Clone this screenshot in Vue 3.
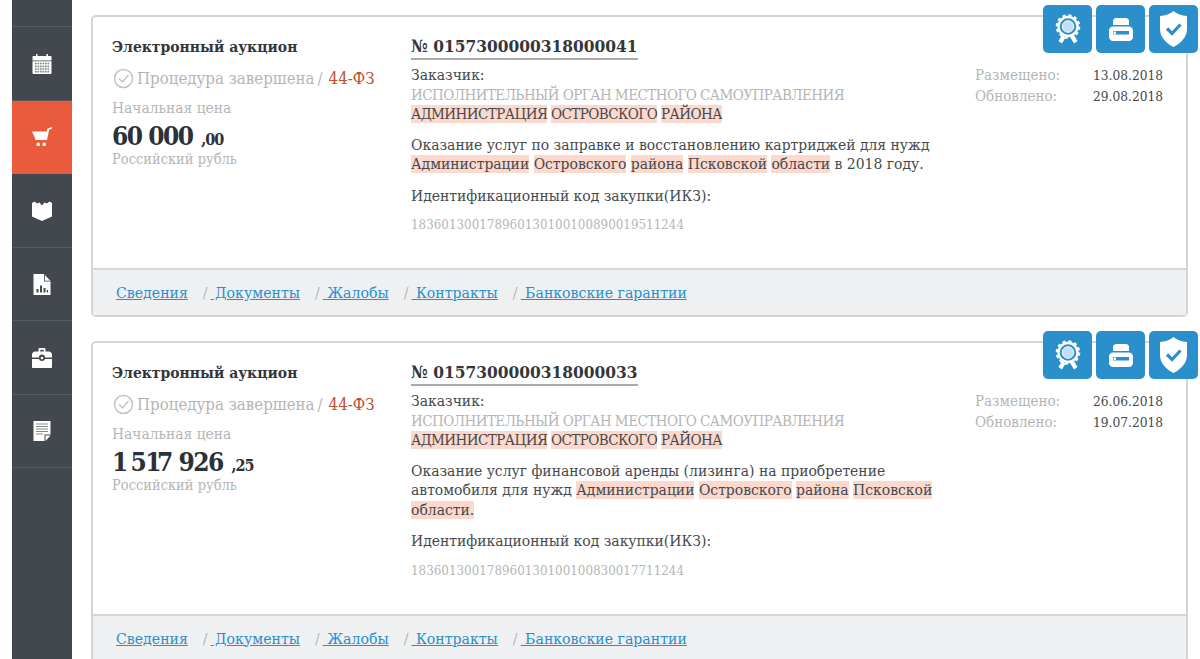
<template>
  <div class="page">
    <!-- боковое меню -->
    <nav class="sidebar">
      <div class="side-item side-top"></div>
      <div v-for="item in menu" :key="item.name" class="side-item" :class="{ active: item.active }">
        <svg v-if="item.name === 'calendar'" width="20" height="20" viewBox="0 0 20 20">
          <path fill="#fff" d="M4 0h1.600v2h8.800V0H16v2h2.500c.6 0 1 .4 1 1v3.500H.5V3c0-.6.4-1 1-1H4z" />
          <path fill="#fff" d="M.5 7.200h19V19c0 .6-.4 1-1 1h-17c-.6 0-1-.4-1-1z" />
          <path fill="none" stroke="#85898d" stroke-width="1.700" stroke-dasharray="1.700 .8" d="M3 9.500h14M3 12.300h14M3 15h14M3 17.700h14" />
        </svg>
        <svg v-else-if="item.name === 'cart'" width="20" height="20" viewBox="0 0 20 20">
          <path fill="#fff" d="M20 0l-.5 2-2.300.6L15 13H3.500L2.800 10.500 0 4.500h14.800l.6-2.800z" />
          <rect fill="#fff" x="4.500" y="15.500" width="3.500" height="3.500" rx="1.500" />
          <rect fill="#fff" x="10.500" y="15.500" width="3.500" height="3.500" rx="1.500" />
        </svg>
        <svg v-else-if="item.name === 'book'" width="20" height="20" viewBox="0 0 20 20">
          <path fill="#fff" d="M0 2l2.500-1.500L5 2.500l2.500-1L10 4.500l2.500-3 2.500 1L17.500.5 20 2v13.500L10 20 0 15.500z" />
        </svg>
        <svg v-else-if="item.name === 'report'" width="18" height="21" viewBox="0 0 18 21">
          <path fill="#fff" fill-rule="evenodd" d="M.5 0h10.500l6.500 7v14H.5zM3.500 15v3.500h2V15zm3.500-3.500v7h2v-7zm3.500 2.500v4.500h2V14zm3.200 2v2.500h1.300V16z" />
          <path fill="#42484d" d="M11 0v7.500h6.500v-.8h-5.700V0z" />
        </svg>
        <svg v-else-if="item.name === 'case'" width="20" height="20" viewBox="0 0 20 20">
          <path fill="#fff" fill-rule="evenodd" d="M6.500 3.500V1c0-.5.5-1 1-1h5c.5 0 1 .5 1 1v2.500H17c1.500 0 3 1.500 3 3v3H13a3 3 0 0 0-6 0H0v-3c0-1.500 1.500-3 3-3zM8.300 3.500h3.400V1.700H8.300z" />
          <path fill="#fff" d="M0 11h7c.4 1.300 1.600 2 3 2s2.600-.7 3-2h7v8c0 .6-.4 1-1 1H1c-.6 0-1-.4-1-1z" />
          <circle fill="#fff" cx="10" cy="10" r="1.300" />
        </svg>
        <svg v-else width="18" height="20" viewBox="0 0 18 20">
          <path fill="#fff" d="M.5 0h17v13.500h-6V20H.5z" />
          <path fill="none" stroke="#85898d" d="M3 3h12M3 5.500h12M3 8h12M3 10.500h12M3 13h7" />
          <path fill="#fff" d="M12.500 14.500h5L12.500 20z" />
        </svg>
      </div>
    </nav>

    <main class="content">
      <article v-for="card in cards" :key="card.number" class="card">
        <div class="actions">
          <button class="action">
            <svg width="26" height="30" viewBox="0 0 26 30">
              <circle cx="13" cy="12.500" r="9.500" fill="none" stroke="#fff" stroke-width="2.400" />
              <circle cx="13" cy="12.500" r="11.200" fill="none" stroke="#fff" stroke-width="2.200" stroke-dasharray="3.200 2.660" />
              <circle cx="13" cy="12.500" r="5.800" fill="#c3dff1" stroke="#fff" stroke-width="1" />
              <path fill="#fff" d="M7 21l3.500 2.500-3.500 6-3.500-2.500zM19 21l-3.500 2.500 3.500 6 3.500-2.500z" />
            </svg>
          </button>
          <button class="action">
            <svg width="24" height="23" viewBox="0 0 24 23">
              <path fill="#fff" d="M4 7V3c0-1.600 1.400-3 3-3h10c1.600 0 3 1.400 3 3v4z" />
              <path fill="#fff" fill-rule="evenodd" d="M4 8.500h16c2.200 0 4 1.800 4 4V19c0 2.200-1.800 4-4 4H4c-2.200 0-4-1.800-4-4v-6.500c0-2.200 1.800-4 4-4zm0 4.500v3.500h16V13z" />
              <path fill="#fff" d="M4.500 13.500h2.500V16H4.500z" />
            </svg>
          </button>
          <button class="action">
            <svg width="27" height="36" viewBox="0 0 27 36">
              <path fill="#fff" d="M13.500 0c3.500 3 8 4.500 13.500 5v13c0 8-6 14-13.500 18C6 32 0 26 0 18V5c5.500-.5 10-2 13.500-5z" />
              <path fill="none" stroke="#2a8fcb" stroke-width="3.200" d="M7 17.500l5 5 8.500-9" />
            </svg>
          </button>
        </div>

        <div class="card-body">
          <div class="col-left">
            <div class="kind">Электронный аукцион</div>
            <div class="status">
              <svg width="21" height="21" viewBox="0 0 21 21">
                <circle cx="10.500" cy="10.500" r="9" fill="none" stroke="#c4c4c4" stroke-width="1.500" />
                <path fill="none" stroke="#c4c4c4" stroke-width="1.500" d="M6 10.500l3.500 3.500 6-7" />
              </svg>
              <span>Процедура завершена</span>
              <span>/</span>
              <span class="law">44-ФЗ</span>
            </div>
            <div class="price-label">Начальная цена</div>
            <div class="price"><span v-for="(ch, i) in card.price" :key="i" :class="{ one: ch === '1' }">{{ ch }}</span> <small>,{{ card.cents }}</small></div>
            <div class="currency">Российский рубль</div>
          </div>

          <div class="col-mid">
            <div class="number-row"><span class="number">№ {{ card.number }}</span></div>
            <div class="line">Заказчик:</div>
            <div class="line caps muted">ИСПОЛНИТЕЛЬНЫЙ ОРГАН МЕСТНОГО САМОУПРАВЛЕНИЯ</div>
            <div class="line caps"><mark>АДМИНИСТРАЦИЯ</mark> <mark>ОСТРОВСКОГО</mark> <mark>РАЙОНА</mark></div>
            <p class="descr">
              <template v-for="(part, i) in card.descr" :key="i">
                <mark v-if="part.hl">{{ part.text }}</mark>
                <template v-else>{{ part.text }}</template>
                {{ ' ' }}
              </template>
            </p>
            <div class="line">Идентификационный код закупки(ИКЗ):</div>
            <div class="code">{{ card.code }}</div>
          </div>

          <div class="col-right">
            <div class="date-row"><span>Размещено:</span><b>{{ card.posted }}</b></div>
            <div class="date-row"><span>Обновлено:</span><b>{{ card.updated }}</b></div>
          </div>
        </div>

        <div class="card-foot">
          <template v-for="(link, i) in links" :key="link">
            <span v-if="i" class="sep">/</span>
            <a href="#">{{ i ? ' ' + link : link }}</a>
          </template>
        </div>
      </article>
    </main>
  </div>
</template>

<script setup>
const menu = [
  { name: 'calendar' },
  { name: 'cart', active: true },
  { name: 'book' },
  { name: 'report' },
  { name: 'case' },
  { name: 'note' }
]

const links = ['Сведения', 'Документы', 'Жалобы', 'Контракты', 'Банковские гарантии']

const cards = [
  {
    number: '0157300000318000041',
    price: '60 000',
    cents: '00',
    posted: '13.08.2018',
    updated: '29.08.2018',
    code: '183601300178960130100100890019511244',
    descr: [
      { text: 'Оказание услуг по заправке и восстановлению картриджей для нужд' },
      { text: 'Администрации', hl: true },
      { text: 'Островского', hl: true },
      { text: 'района', hl: true },
      { text: 'Псковской', hl: true },
      { text: 'области', hl: true },
      { text: 'в 2018 году.' }
    ]
  },
  {
    number: '0157300000318000033',
    price: '1 517 926',
    cents: '25',
    posted: '26.06.2018',
    updated: '19.07.2018',
    code: '183601300178960130100100830017711244',
    descr: [
      { text: 'Оказание услуг финансовой аренды (лизинга) на приобретение автомобиля для нужд' },
      { text: 'Администрации', hl: true },
      { text: 'Островского', hl: true },
      { text: 'района', hl: true },
      { text: 'Псковской', hl: true },
      { text: 'области.', hl: true }
    ]
  }
]
</script>

<style>
html, body {
  background: #fff;
  overflow: hidden;
}
</style>

<style scoped>
.page {
  display: flex;
  height: 659px;
  overflow: hidden;
  padding-left: 12px;
  font-family: "DejaVu Serif", "Liberation Serif", serif;
  font-stretch: condensed;
  font-size: 15.500px;
  color: #45494d;
}

.sidebar {
  width: 60px;
  flex: none;
  background: #42484d;
}

.side-item {
  height: 73.500px;
  display: flex;
  align-items: center;
  justify-content: center;
  padding-top: 1px;
  border-bottom: 1px solid #555a5f;
  box-sizing: border-box;
}

.side-top {
  height: 27px;
}

.side-item.active {
  background: #ea5a3d;
  border-bottom-color: #ea5a3d;
}

.content {
  flex: 1;
  padding: 15px 12px 0 19px;
  display: flex;
  flex-direction: column;
  gap: 24px;
}

.card {
  position: relative;
  flex: none;
  border: 2px solid #d4d5d7;
  border-radius: 5px;
}

.actions {
  position: absolute;
  top: -12px;
  right: -12px;
  display: flex;
  gap: 4px;
}

.action {
  width: 49px;
  height: 48px;
  padding: 0;
  border: 0;
  border-radius: 5px;
  background: #2a8fcb;
  display: flex;
  align-items: center;
  justify-content: center;
}

.card-body {
  display: flex;
  padding: 20px 0 0 19px;
}

.col-left {
  width: 299px;
  flex: none;
}

.kind {
  font-weight: 700;
  font-size: 15.500px;
  color: #33373b;
  line-height: 20px;
}

.status {
  display: flex;
  align-items: center;
  gap: 3px;
  margin-top: 10px;
  margin-left: 1px;
  font-size: 16.700px;
  color: #b5b5b5;
  line-height: 22px;
}

.law {
  color: #c0502e;
  margin-left: 3px;
}

.price-label {
  margin-top: 10px;
  font-size: 15.400px;
  line-height: 18px;
  color: #b5b5b5;
}

.price {
  font-weight: 700;
  font-size: 26px;
  letter-spacing: -1.500px;
  line-height: 32px;
  margin-top: 3px;
  color: #2b3138;
}

.price .one {
  letter-spacing: -4.500px;
}

.price small {
  font-size: 16px;
  letter-spacing: -1px;
  margin-left: 2px;
}

.currency {
  font-size: 14.500px;
  line-height: 14px;
  color: #b5b5b5;
  margin-top: -4px;
}

.col-mid {
  width: 564px;
  flex: none;
}

.number-row {
  line-height: 22px;
  margin-top: -1px;
}

.number {
  display: inline-block;
  font-weight: 700;
  font-size: 17.200px;
  color: #33373b;
  border-bottom: 2px solid #aaa;
  line-height: 21px;
  padding-bottom: 1px;
}

.line {
  line-height: 19.500px;
}

.number-row + .line {
  margin-top: 6px;
}

.caps {
  font-size: 15px;
  letter-spacing: -.55px;
}

.muted {
  color: #b5b5b5;
}

mark {
  background: #fdd8cc;
  color: inherit;
}

.descr {
  margin: 11px 0 12px;
  width: 545px;
  line-height: 19.500px;
}

.code {
  margin-top: 9px;
  font-size: 13.250px;
  line-height: 19px;
  color: #b5b5b5;
  padding-bottom: 34px;
}

.col-right {
  margin-top: 28px;
  font-size: 13.600px;
}

.date-row {
  display: flex;
  line-height: 20.500px;
}

.date-row span {
  width: 118px;
  font-size: 15px;
  color: #b5b5b5;
}

.date-row b {
  font-weight: 400;
  color: #45494d;
}

.card-foot {
  background: #eff0f2;
  border-top: 2px solid #d4d5d7;
  height: 45px;
  padding-left: 23px;
  display: flex;
  align-items: center;
  font-size: 15.700px;
}

.card-foot a {
  color: #2a8fcb;
  text-decoration: underline;
  white-space: pre;
}

.sep {
  color: #b5b5b5;
  margin: 0 3px 0 15px;
}
</style>
